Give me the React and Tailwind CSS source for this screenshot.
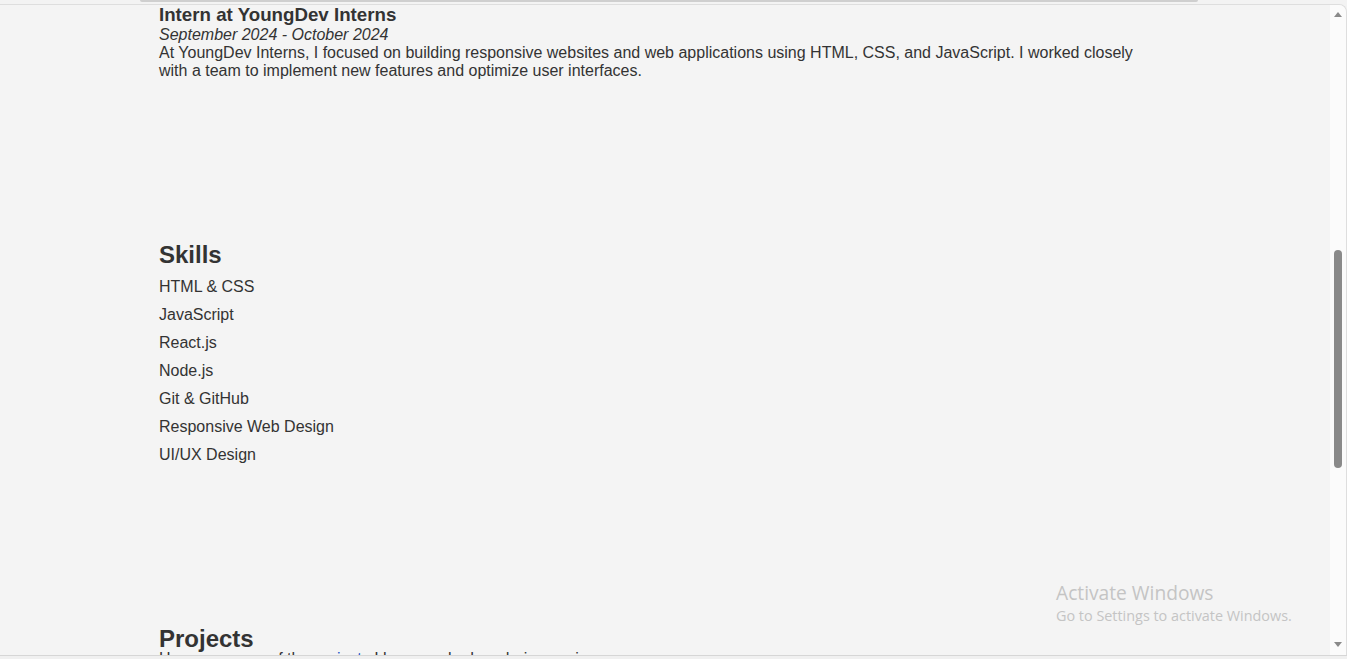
export default function App() {
  const skills = [
    "HTML & CSS",
    "JavaScript",
    "React.js",
    "Node.js",
    "Git & GitHub",
    "Responsive Web Design",
    "UI/UX Design",
  ];
  return (
    <div
      className="relative flex h-[659px] w-[1347px] flex-col overflow-hidden bg-[#f3f3f3] text-[#333]"
      style={{ fontFamily: '"Liberation Sans", Arial, sans-serif' }}
    >
      <div className="h-[4px] shrink-0">
        <div className="ml-[140px] h-[2px] w-[1058px] rounded-b-[2px] bg-[#cfcfcf]" />
      </div>
      <div className="flex min-h-0 flex-1 overflow-hidden rounded-tr-[8px] border-t border-r border-[#dedede]">
        <main className="min-w-0 flex-1 overflow-hidden bg-[#f4f4f4] pl-[159px]">
          <div className="w-[1000px]">
            <h3 className="text-[18.72px] font-bold leading-[19px]">Intern at YoungDev Interns</h3>
            <p className="mt-[2px] text-[16px] italic leading-[18px]">September 2024 - October 2024</p>
            <p className="text-[16px] leading-[18px]">
              At YoungDev Interns, I focused on building responsive websites and web applications using HTML, CSS, and JavaScript. I worked closely with a team to implement new features and optimize user interfaces.
            </p>

            <h2 className="mt-[161px] text-[24px] font-bold leading-[28px]">Skills</h2>
            <ul className="mt-[9px] flex flex-col gap-[10px]">
              {skills.map((s) => (
                <li key={s} className="text-[16px] leading-[18px]">{s}</li>
              ))}
            </ul>

            <h2 className="mt-[161px] text-[24px] font-bold leading-[28px]">Projects</h2>
            <p className="-mt-[3px] text-[16px] leading-[18px]">
              Here are some of the <span className="text-[#1a55c9]">projects</span> I have worked on during my journey.
            </p>
          </div>
        </main>
        <div className="flex w-[16px] shrink-0 flex-col items-center bg-[#fbfbfb]">
          <div className="mt-[7px] h-0 w-0 border-x-[4px] border-b-[5px] border-x-transparent border-b-[#8a8a8a]" />
          <div className="mt-[233px] h-[218px] w-[8px] rounded-full bg-[#8a8a8a]" />
          <div className="flex-1" />
          <div className="mb-[8px] h-0 w-0 border-x-[4px] border-t-[5px] border-x-transparent border-t-[#8a8a8a]" />
        </div>
      </div>
      <div className="h-[4px] shrink-0 border-t border-[#d6d6d6] bg-[#f0f0f0]" />

      <div
        className="pointer-events-none absolute left-[1056px] top-[580px] text-[#c4c4c4]"
        style={{ fontFamily: '"Open Sans", "Noto Sans", sans-serif' }}
      >
        <div className="text-[19.2px] leading-[26px]">Activate Windows</div>
        <div className="text-[14.4px] leading-[20px]">Go to Settings to activate Windows.</div>
      </div>
    </div>
  );
}
